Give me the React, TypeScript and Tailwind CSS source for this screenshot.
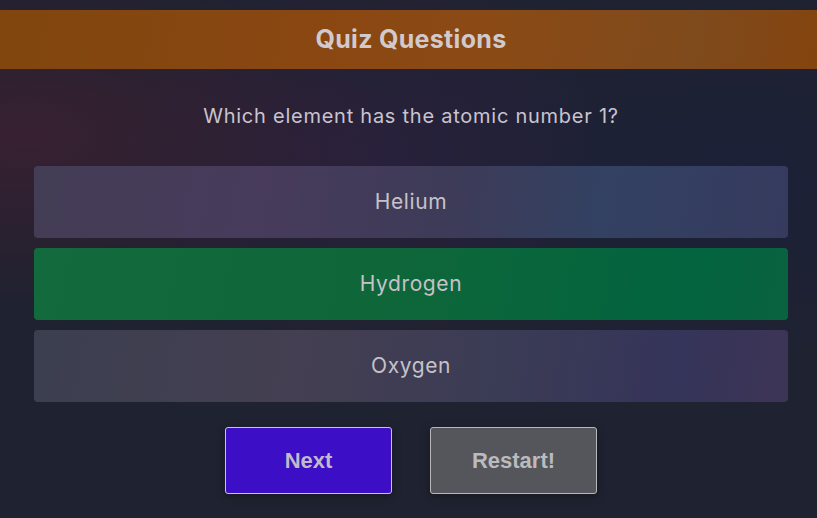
import React from 'react';

const OPTIONS = [
  { id: 'he', label: 'Helium', state: 'idle' },
  { id: 'h', label: 'Hydrogen', state: 'correct' },
  { id: 'o', label: 'Oxygen', state: 'idle' },
];

export default function App() {
  return (
    <div className="relative min-h-[518px] w-full overflow-hidden bg-[#1f2230] bg-[radial-gradient(ellipse_at_3%_26%,rgba(80,30,50,0.5),transparent_32%),radial-gradient(ellipse_at_45%_30%,rgba(60,30,80,0.35),transparent_40%),radial-gradient(ellipse_at_90%_35%,rgba(20,30,70,0.35),transparent_40%)] pt-[10px] font-['Inter',sans-serif]">
      <header className="flex h-[59px] items-center justify-center bg-[#86480f] bg-[linear-gradient(100deg,#80460e_0%,#8a4712_40%,#8a4a16_60%,#7f4a1c_85%,#84440f_100%)] pl-[5px]">
        <h1 className="text-[25px] font-bold tracking-[0.3px] text-[#d2c9cd]">Quiz Questions</h1>
      </header>

      <div className="pl-[5px]">
        <p className="mt-[35px] text-center text-[20px] leading-[24px] tracking-[0.75px] text-[#c9c4cf]">
          Which element has the atomic number 1?
        </p>

        <div className="mx-[29px] mt-[38px] flex flex-col gap-[10px]">
          {OPTIONS.map((o, i) => (
            <button
              key={o.id}
              className={
                o.state === 'correct'
                  ? 'flex h-[72px] items-center justify-center rounded-[4px] bg-[linear-gradient(100deg,#136a3d_0%,#0f6739_45%,#03643f_85%,#0a6240_100%)] text-[21px] tracking-[0.6px] text-[#c6c2c8]'
                  : i === 0
                    ? 'flex h-[72px] items-center justify-center rounded-[4px] bg-[linear-gradient(100deg,#433d55_0%,#483b5c_30%,#3d3b58_55%,#334162_75%,#363b5e_100%)] text-[21px] tracking-[0.6px] text-[#c6c2c8]'
                    : 'flex h-[72px] items-center justify-center rounded-[4px] bg-[linear-gradient(100deg,#3c3f50_0%,#443f52_35%,#3b3c55_60%,#35345a_85%,#3d3556_100%)] text-[21px] tracking-[0.6px] text-[#c6c2c8]'
              }
            >
              {o.label}
            </button>
          ))}
        </div>

        <div className="mt-[25px] flex justify-center gap-[38px] font-['Liberation_Sans',Arial,sans-serif]">
          <button className="h-[67px] w-[167px] rounded-[3px] border border-[#c9c6d4] bg-[#3c0fc6] text-[22px] font-bold text-[#c0bacb] shadow-[0_2px_8px_rgba(0,0,0,0.35)]">
            Next
          </button>
          <button className="h-[67px] w-[167px] rounded-[3px] border border-[#b8b8bc] bg-[#55565b] text-[22px] font-bold text-[#bbbbbe] shadow-[0_2px_8px_rgba(0,0,0,0.35)]">
            Restart!
          </button>
        </div>
      </div>
    </div>
  );
}
